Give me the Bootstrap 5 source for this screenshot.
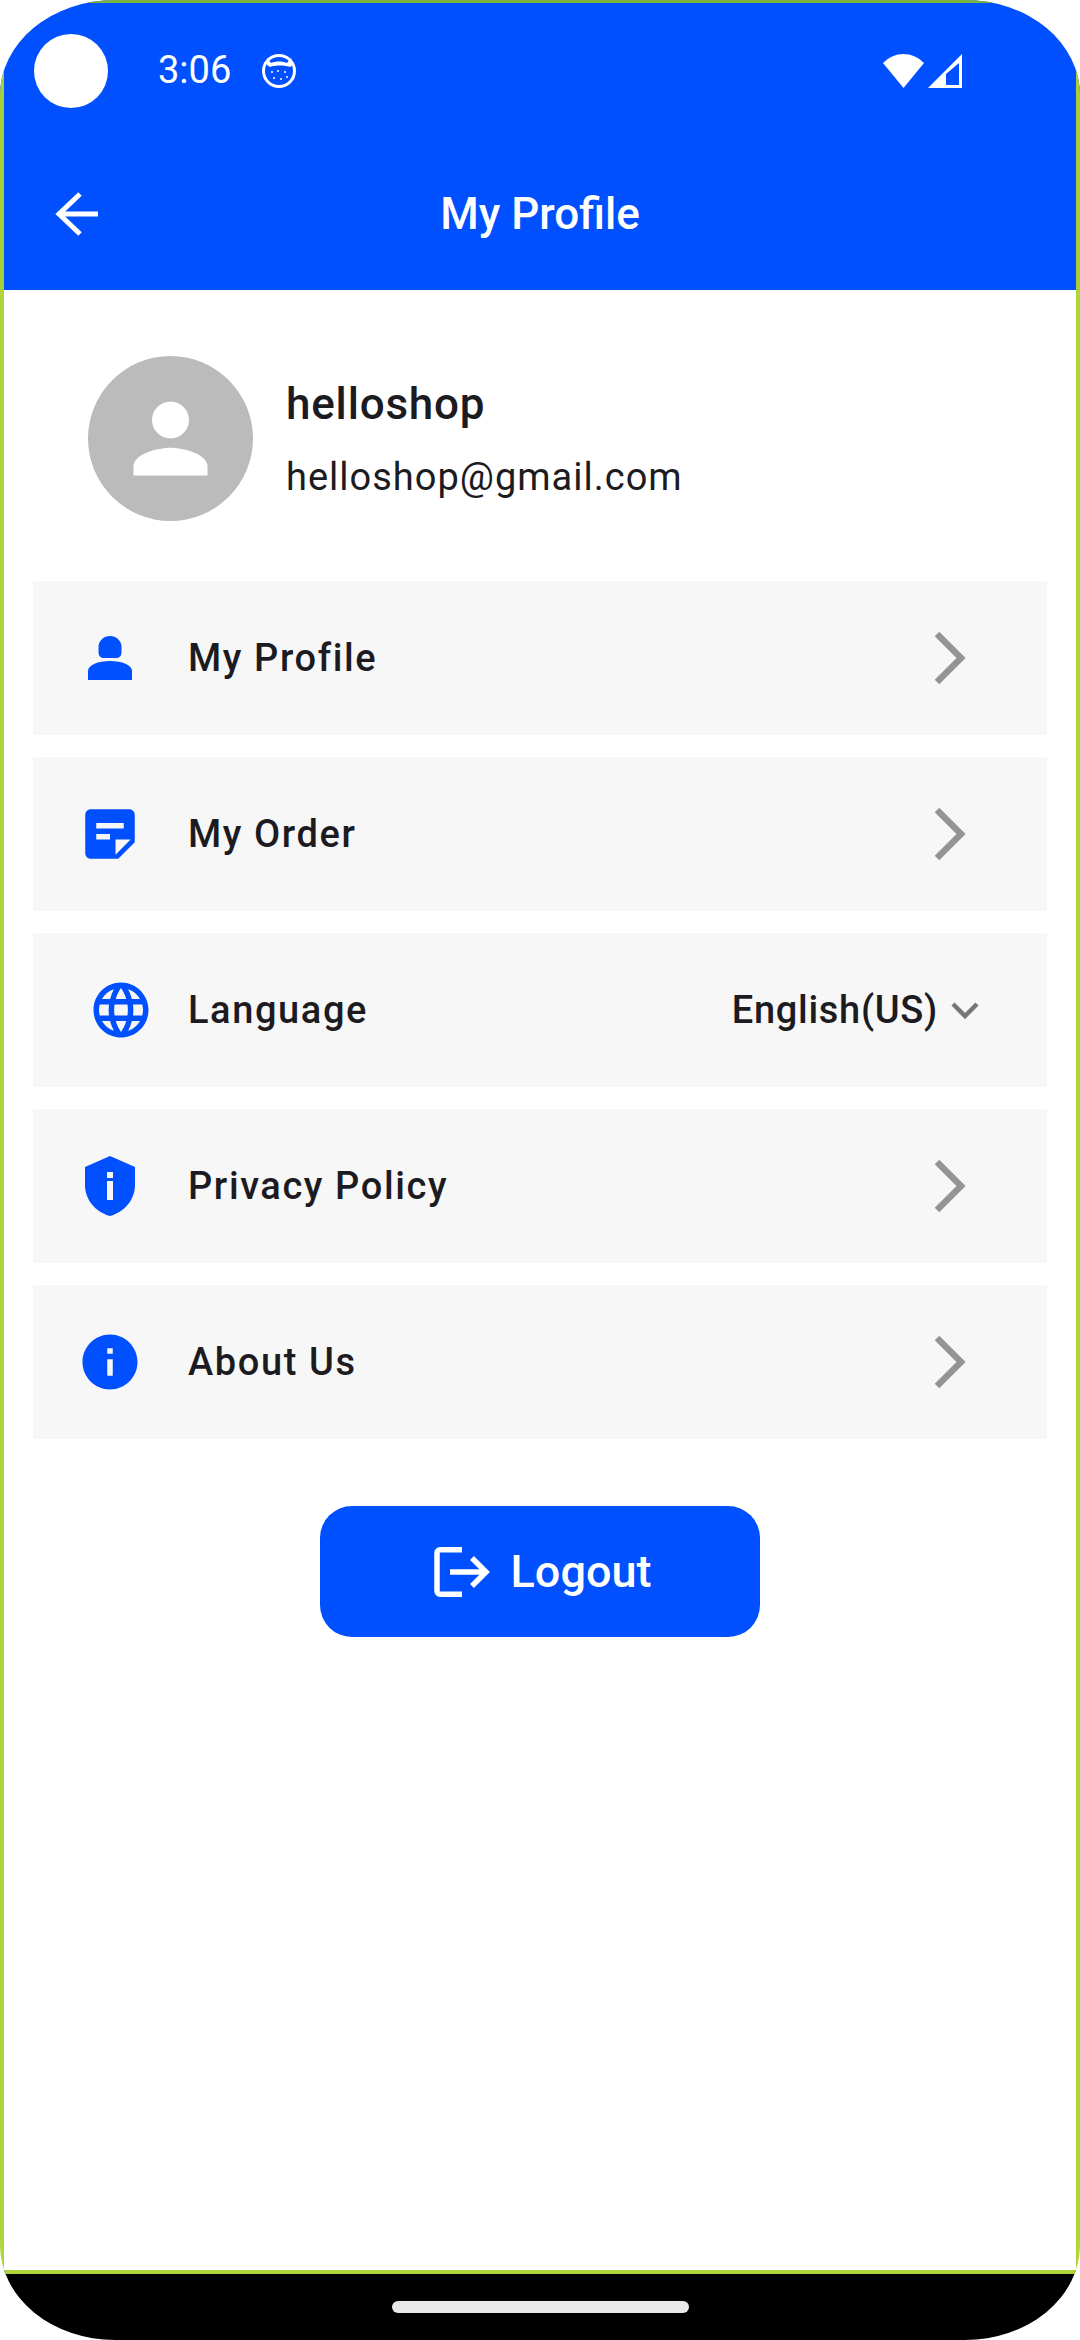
<!DOCTYPE html>
<html lang="en">
<head>
    <meta charset="UTF-8">
    <title>My Profile</title>
    <link href="https://cdn.jsdelivr.net/npm/bootstrap@5.3.0/dist/css/bootstrap.min.css" rel="stylesheet">
    <style>
        body { background: #fff; font-family: Roboto, sans-serif; color: #1c1b1f; }
        .phone { width: 1080px; height: 2340px; border-radius: 115px / 95px; overflow: hidden; background: #fff; }
        .app-head { height: 290px; background: #0050ff; color: #fff; flex: none;
                    border: solid #a5d038; border-width: 3px 4px 0 4px; border-top-color: #7cb33c; }
        .status-row { height: 135px; padding-left: 30px; padding-right: 114px; }
        .dot { width: 74px; height: 74px; border-radius: 50%; background: #fff; }
        .clock { font-size: 38px; margin-left: 50px; margin-right: 30px; }
        .nav-row { height: 152px; }
        .nav-side { width: 200px; padding-left: 50px; }
        .title-txt { font-size: 44px; font-weight: 500; }
        .app-body { border: solid #aed63a; border-width: 0 4px; }
        .who { padding: 66px 0 60px 84px; }
        .avatar { width: 165px; height: 165px; border-radius: 50%; background: #bbb; margin-right: 33px; }
        .who-txt { padding-top: 3px; }
        .who-name { font-size: 44px; font-weight: 500; letter-spacing: .8px; line-height: 50px; margin-bottom: 24px; }
        .who-mail { font-size: 38px; letter-spacing: 1px; line-height: 48px; }
        .menu-list { padding: 0 29px; gap: 22px; }
        .menu-row { height: 154px; background: #f7f7f7; padding-right: 78px; }
        .menu-row.has-drop { padding-right: 68px; }
        .ic-cell { width: 154px; margin-right: 1px; }
        .ic-shift { margin-left: 22px; }
        .menu-txt { font-size: 38px; font-weight: 500; letter-spacing: 1.6px; }
        .lang-val { font-size: 38px; font-weight: 500; letter-spacing: .7px; margin-right: 13px; }
        .logout-btn { width: 440px; height: 131px; border-radius: 32px; margin-top: 67px; background: #0050ff; border: 0; color: #fff; font-size: 45px; font-weight: 500; gap: 21px; }
        .logout-btn:hover { background: #0050ff; color: #fff; }
        .logout-btn.p-0 { padding-left: 5px !important; }
        .bottom-bar { height: 70px; background: #000; border-top: 4px solid #aed63a; flex: none; }
        .home-pill { width: 297px; height: 12px; border-radius: 6px; background: #e8e8e8; margin-top: 27px; }
    </style>
</head>
<body class="m-0">
    <div class="phone d-flex flex-column">
        <header class="app-head">
            <div class="status-row d-flex align-items-center">
                <div class="dot"></div>
                <span class="clock">3:06</span>
                <svg width="36" height="36" viewBox="0 0 36 36">
                    <circle cx="18" cy="18" r="15.500" fill="none" stroke="#fff" stroke-width="3"/>
                    <path d="M6 5l4 5c5-2 11-2 16 0l4-5 2 7-3 2c-5-2-15-2-20 0l-3-2z" fill="#fff"/>
                    <g fill="#fff"><circle cx="11" cy="19" r="1"/><circle cx="17" cy="18" r="1"/><circle cx="24" cy="19" r="1"/><circle cx="13" cy="25" r="1"/><circle cx="20" cy="26" r="1"/><circle cx="26" cy="24" r="1"/></g>
                </svg>
                <svg class="ms-auto" width="79" height="36" viewBox="0 0 79 36" fill="#fff">
                    <path d="M0 10C12-2 29-2 41 10L20.500 35z"/>
                    <path fill-rule="evenodd" d="M45 35L79 1v34zM63 21L76 10v22H63z"/>
                </svg>
            </div>
            <div class="nav-row d-flex align-items-center">
                <div class="nav-side">
                    <svg class="d-block" width="44" height="46" viewBox="0 0 44 46" fill="none" stroke="#fff" stroke-width="5"><path d="M44 23H5M26 3L5 23l21 20"/></svg>
                </div>
                <div class="flex-grow-1 text-center title-txt">My Profile</div>
                <div class="nav-side"></div>
            </div>
        </header>

        <main class="app-body flex-grow-1">
            <section class="who d-flex align-items-center">
                <div class="avatar d-flex align-items-center justify-content-center">
                    <svg width="111" height="111" viewBox="0 0 24 24" fill="#fff"><path d="M12 12c2.210 0 4-1.790 4-4s-1.790-4-4-4-4 1.790-4 4 1.790 4 4 4zm0 2c-2.670 0-8 1.340-8 4v2h16v-2c0-2.660-5.330-4-8-4z"/></svg>
                </div>
                <div class="who-txt">
                    <div class="who-name">helloshop</div>
                    <div class="who-mail">helloshop@gmail.com</div>
                </div>
            </section>

            <div class="menu-list d-flex flex-column">
                <div class="menu-row d-flex align-items-center">
                    <div class="ic-cell d-flex justify-content-center">
                        <svg width="44" height="44" viewBox="0 0 44 44" fill="#0050ff"><path d="M10.500 11a11.500 11 0 0 1 23 0v5c0 4-2 6-6 6h-11c-4 0-6-2-6-6zM0 44V35c0-6 10-10 22-10s22 4 22 10v9z"/></svg>
                    </div>
                    <span class="menu-txt">My Profile</span>
                    <svg class="ms-auto" width="36" height="56" viewBox="0 0 36 56" fill="none" stroke="#949494" stroke-width="6.500"><path d="M4 4l24 24L4 52"/></svg>
                </div>
                <div class="menu-row d-flex align-items-center">
                    <div class="ic-cell d-flex justify-content-center">
                        <svg width="66" height="66" viewBox="0 0 24 24" fill="#0050ff"><path d="M19 3H4.990C3.890 3 3 3.900 3 5l.01 14c0 1.100.89 2 1.990 2h10l6-6V5c0-1.100-.9-2-2-2zM7 8h10v2H7V8zm5 6H7v-2h5v2zm2 5.500V14h5.500L14 19.500z"/></svg>
                    </div>
                    <span class="menu-txt">My Order</span>
                    <svg class="ms-auto" width="36" height="56" viewBox="0 0 36 56" fill="none" stroke="#949494" stroke-width="6.500"><path d="M4 4l24 24L4 52"/></svg>
                </div>
                <div class="menu-row has-drop d-flex align-items-center">
                    <div class="ic-cell d-flex justify-content-center">
                        <svg class="ic-shift" width="66" height="66" viewBox="0 0 24 24" fill="#0050ff"><path d="M11.990 2C6.470 2 2 6.480 2 12s4.470 10 9.990 10C17.520 22 22 17.520 22 12S17.520 2 11.990 2zm6.930 6h-2.950c-.32-1.250-.78-2.450-1.380-3.560 1.840.63 3.370 1.910 4.330 3.560zM12 4.040c.83 1.200 1.480 2.530 1.910 3.960h-3.820c.43-1.430 1.080-2.760 1.910-3.960zM4.260 14C4.100 13.360 4 12.690 4 12s.1-1.360.26-2h3.380c-.08.66-.14 1.320-.14 2s.06 1.340.14 2H4.260zm.82 2h2.950c.32 1.250.78 2.450 1.380 3.560-1.840-.63-3.370-1.900-4.330-3.560zm2.950-8H5.080c.96-1.660 2.490-2.930 4.330-3.560C8.810 5.550 8.350 6.750 8.030 8zM12 19.960c-.83-1.200-1.480-2.530-1.910-3.960h3.820c-.43 1.430-1.080 2.760-1.910 3.960zM14.340 14H9.660c-.09-.66-.16-1.320-.16-2s.07-1.350.16-2h4.680c.09.650.16 1.320.16 2s-.07 1.340-.16 2zm.25 5.560c.6-1.110 1.060-2.310 1.380-3.560h2.950c-.96 1.650-2.490 2.930-4.330 3.560zM16.360 14c.08-.66.14-1.320.14-2s-.06-1.340-.14-2h3.380c.16.64.26 1.310.26 2s-.1 1.360-.26 2h-3.380z"/></svg>
                    </div>
                    <span class="menu-txt">Language</span>
                    <span class="lang-val ms-auto">English(US)</span>
                    <svg width="28" height="18" viewBox="0 0 28 18" fill="none" stroke="#777" stroke-width="4.500"><path d="M2 3l12 12L26 3"/></svg>
                </div>
                <div class="menu-row d-flex align-items-center">
                    <div class="ic-cell d-flex justify-content-center">
                        <svg width="50" height="60" viewBox="0 0 50 60" fill="#0050ff"><path fill-rule="evenodd" d="M25 0L50 11v18c0 14-10 27-25 31C10 56 0 43 0 29V11zM22 16v6h6v-6zM22 25v19h6V25z"/></svg>
                    </div>
                    <span class="menu-txt">Privacy Policy</span>
                    <svg class="ms-auto" width="36" height="56" viewBox="0 0 36 56" fill="none" stroke="#949494" stroke-width="6.500"><path d="M4 4l24 24L4 52"/></svg>
                </div>
                <div class="menu-row d-flex align-items-center">
                    <div class="ic-cell d-flex justify-content-center">
                        <svg width="66" height="66" viewBox="0 0 24 24" fill="#0050ff"><path d="M12 2C6.480 2 2 6.480 2 12s4.480 10 10 10 10-4.480 10-10S17.520 2 12 2zm1 15h-2v-6h2v6zm0-8h-2V7h2v2z"/></svg>
                    </div>
                    <span class="menu-txt">About Us</span>
                    <svg class="ms-auto" width="36" height="56" viewBox="0 0 36 56" fill="none" stroke="#949494" stroke-width="6.500"><path d="M4 4l24 24L4 52"/></svg>
                </div>
            </div>

            <div class="text-center">
                <button type="button" class="btn logout-btn d-inline-flex align-items-center justify-content-center p-0">
                    <svg width="56" height="50" viewBox="0 0 56 50" fill="none" stroke="#fff" stroke-width="5.500"><path d="M28 2.750H6a3 3 0 0 0-3 3v38.500a3 3 0 0 0 3 3h22M16 25h36M38 11l14 14-14 14"/></svg>
                    Logout
                </button>
            </div>
        </main>

        <footer class="bottom-bar d-flex justify-content-center">
            <div class="home-pill"></div>
        </footer>
    </div>

    <script src="https://cdn.jsdelivr.net/npm/bootstrap@5.3.0/dist/js/bootstrap.bundle.min.js"></script>
</body>
</html>
